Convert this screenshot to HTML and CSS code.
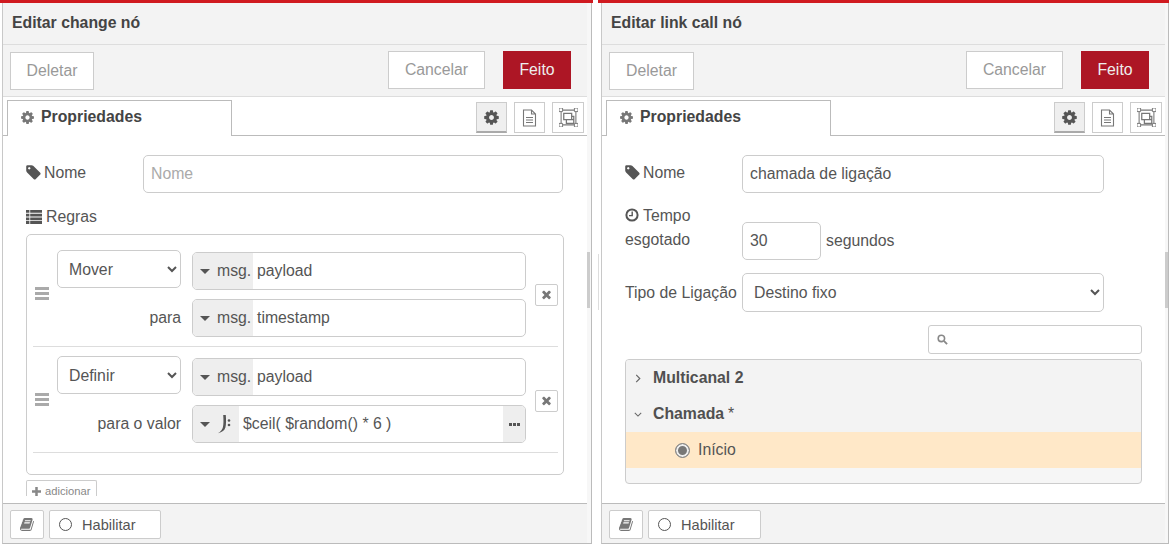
FILE: index.html
```html
<!DOCTYPE html>
<html lang="en">
<head>
    <meta charset="UTF-8">
    <title>Editar nó</title>
    <link rel="stylesheet" href="styles.css">
</head>
<body>
    <svg class="defs" width="0" height="0">
        <defs>
            <symbol id="i-cog" viewBox="0 0 1792 1792"><path d="M1152 896q0-106-75-181t-181-75-181 75-75 181 75 181 181 75 181-75 75-181zm512-109v222q0 12-8 23t-20 13l-185 28q-19 54-39 91 35 50 107 138 10 12 10 25t-9 23q-27 37-99 108t-94 71q-12 0-26-9l-138-108q-44 23-91 38-16 136-29 186-7 28-36 28h-222q-14 0-24.5-8.5t-11.5-21.5l-28-184q-49-16-90-37l-141 107q-10 9-25 9-14 0-25-11-126-114-165-168-7-10-7-23 0-12 8-23 15-21 51-66.5t54-70.5q-27-50-41-99l-183-27q-13-2-21-12.5t-8-23.5v-222q0-12 8-23t19-13l186-28q14-46 39-92-40-57-107-138-10-12-10-24 0-10 9-23 26-36 98.5-107.5t94.5-71.5q13 0 26 10l138 107q44-23 91-38 16-136 29-186 7-28 36-28h222q14 0 24.5 8.5t11.5 21.5l28 184q49 16 90 37l142-107q9-9 24-9 13 0 25 10 129 119 165 170 7 8 7 22 0 12-8 23-15 21-51 66.5t-54 70.5q26 50 41 98l183 28q13 2 21 12.5t8 23.5z"/></symbol>
            <symbol id="i-tag" viewBox="0 0 1792 1792"><path d="M576 448q0-53-37.5-90.5t-90.5-37.5-90.5 37.5-37.5 90.5 37.5 90.5 90.5 37.5 90.5-37.5 37.5-90.5zm1067 576q0 53-37 90l-491 492q-39 37-91 37-53 0-90-37l-715-716q-38-37-64.5-101t-26.5-117v-416q0-52 38-90t90-38h416q53 0 117 26.5t102 64.5l715 714q37 39 37 91z"/></symbol>
            <symbol id="i-book" viewBox="0 0 1792 1792"><path d="M1639 478q40 57 18 129l-275 906q-19 64-76.5 107.5t-122.5 43.5h-923q-77 0-148.5-53.5t-99.5-131.5q-24-67-2-127 0-4 3-27t4-37q1-8-3-21.5t-3-19.5q2-11 8-21t16.5-23.5 16.5-23.5q23-38 45-91.5t30-91.5q3-10 .5-30t-.5-28q3-11 17-28t17-23q21-36 42-92t25-90q1-9-2.5-32t.5-28q4-13 22-30.5t22-22.5q19-26 42.5-84.5t27.5-96.5q1-8-3-25.5t-2-26.5q2-8 9-18t18-23 17-21q8-12 16.5-30.5t15-35 16-36 19.5-32 26.5-23.5 36-11.5 47.5 5.5l-1 3q38-9 51-9h761q74 0 114 56t18 130l-274 906q-36 119-71.5 153.5t-128.5 34.5h-869q-27 0-38 15-11 16-1 43 24 70 144 70h923q29 0 56-15.5t35-41.5l300-987q7-22 5-57 38 15 59 43zm-1064 2q-4 13 2 22.5t20 9.5h608q13 0 25.5-9.5t16.5-22.5l21-64q4-13-2-22.5t-20-9.5h-608q-13 0-25.5 9.5t-16.5 22.5zm-83 256q-4 13 2 22.5t20 9.5h608q13 0 25.5-9.5t16.5-22.5l21-64q4-13-2-22.5t-20-9.5h-608q-13 0-25.5 9.5t-16.5 22.5z"/></symbol>
            <symbol id="i-times" viewBox="0 0 1792 1792"><path d="M1490 1322q0 40-28 68l-136 136q-28 28-68 28t-68-28l-294-294-294 294q-28 28-68 28t-68-28l-136-136q-28-28-28-68t28-68l294-294-294-294q-28-28-28-68t28-68l136-136q28-28 68-28t68 28l294 294 294-294q28-28 68-28t68 28l136 136q28 28 28 68t-28 68l-294 294 294 294q28 28 28 68z"/></symbol>
            <symbol id="i-list" viewBox="0 0 16 14"><path d="M0 0h3.400v2.800H0zM4.200 0H16v2.800H4.200zM0 3.700h3.400v2.800H0zM4.200 3.700H16v2.800H4.200zM0 7.400h3.400v2.800H0zM4.200 7.400H16v2.800H4.200zM0 11.100h3.400V14H0zM4.200 11.100H16V14H4.200z"/></symbol>
            <symbol id="i-clock" viewBox="0 0 14 14"><circle cx="7" cy="7" r="5.600" fill="none" stroke="currentColor" stroke-width="2"/><path d="M7.200 3.400v4.200H4" fill="none" stroke="currentColor" stroke-width="1.400"/></symbol>
            <symbol id="i-file" viewBox="0 0 14 18"><path d="M1 1h8l4 4v12H1z M9 1v4h4" fill="none" stroke="currentColor" stroke-width="1.100"/><path d="M3.500 8.500h7M3.500 11h7M3.500 13.500h7" fill="none" stroke="currentColor" stroke-width="1.100"/></symbol>
            <symbol id="i-group" viewBox="0 0 18 18"><path d="M2 2h14v14H2z" fill="none" stroke="currentColor" stroke-width="1"/><path d="M4.500 5h7.500v6H4.500zM7 11h7v3.500H7zM12 8h2v3" fill="none" stroke="currentColor" stroke-width="1.200"/><path d="M0 0h3.400v3.400H0zM14.600 0H18v3.400h-3.400zM0 14.600h3.400V18H0zM14.600 14.600H18V18h-3.400z" fill="#fff" stroke="currentColor" stroke-width=".9"/></symbol>
            <symbol id="i-search" viewBox="0 0 12 12"><circle cx="4.800" cy="4.800" r="3.500" fill="none" stroke="currentColor" stroke-width="1.700"/><path d="M7.500 7.500l3.500 3.500" stroke="currentColor" stroke-width="2"/></symbol>
            <symbol id="i-plus" viewBox="0 0 10 10"><path d="M3.600 0h2.800v3.600H10v2.800H6.400V10H3.600V6.400H0V3.600h3.600z"/></symbol>
            <symbol id="i-jsonata" viewBox="0 0 16 20"><path d="M7.200 1h2.600c.4 5.200.4 9.400-.4 12.400-.7 2.700-3.200 4.700-7.400 5.800 2.600-1.500 4.300-3.400 4.900-5.900.7-3.100.7-7 .3-12.300z"/><circle cx="13" cy="6.500" r="1.300"/><circle cx="13" cy="11" r="1.300"/></symbol>
        </defs>
    </svg>

    <div class="tray tray-change">
        <div class="tray-frame">
            <div class="tray-main">
                <div class="tray-title">Editar change nó</div>
                <div class="tray-toolbar">
                    <button class="btn btn-delete">Deletar</button>
                    <div class="toolbar-right">
                        <button class="btn btn-cancel">Cancelar</button>
                        <button class="btn btn-done">Feito</button>
                    </div>
                </div>
                <div class="tabs">
                    <div class="tab"><svg class="ico ico-tab"><use href="#i-cog"/></svg>Propriedades</div>
                    <div class="tab-buttons">
                        <span class="tab-btn active"><svg class="ico ico-cog"><use href="#i-cog"/></svg></span>
                        <span class="tab-btn"><svg class="ico ico-file"><use href="#i-file"/></svg></span>
                        <span class="tab-btn"><svg class="ico ico-group"><use href="#i-group"/></svg></span>
                    </div>
                </div>
                <div class="tray-body">
                    <div class="form-row">
                        <label class="form-label"><svg class="ico ico-label"><use href="#i-tag"/></svg>Nome</label>
                        <input class="field field-name-left" type="text" placeholder="Nome">
                    </div>
                    <div class="rules-label"><svg class="ico ico-list"><use href="#i-list"/></svg>Regras</div>
                    <div class="rules">
                        <div class="rule">
                            <div class="handle"><i></i><i></i><i></i></div>
                            <div class="rule-fields">
                                <div class="rule-line rule-line-first">
                                    <select class="rule-select"><option>Mover</option></select>
                                    <div class="typed">
                                        <span class="typed-type"><span class="caret"></span>msg.</span>
                                        <span class="typed-value">payload</span>
                                    </div>
                                </div>
                                <div class="rule-line">
                                    <span class="rule-word">para</span>
                                    <div class="typed">
                                        <span class="typed-type"><span class="caret"></span>msg.</span>
                                        <span class="typed-value">timestamp</span>
                                    </div>
                                </div>
                            </div>
                            <span class="rule-remove"><svg class="ico ico-times"><use href="#i-times"/></svg></span>
                        </div>
                        <div class="rule">
                            <div class="handle"><i></i><i></i><i></i></div>
                            <div class="rule-fields">
                                <div class="rule-line rule-line-first">
                                    <select class="rule-select"><option>Definir</option></select>
                                    <div class="typed">
                                        <span class="typed-type"><span class="caret"></span>msg.</span>
                                        <span class="typed-value">payload</span>
                                    </div>
                                </div>
                                <div class="rule-line">
                                    <span class="rule-word">para o valor</span>
                                    <div class="typed">
                                        <span class="typed-type typed-type-expr"><span class="caret"></span><svg class="ico ico-expr"><use href="#i-jsonata"/></svg></span>
                                        <span class="typed-value">$ceil( $random() * 6 )</span>
                                        <span class="typed-more"><i></i><i></i><i></i></span>
                                    </div>
                                </div>
                            </div>
                            <span class="rule-remove"><svg class="ico ico-times"><use href="#i-times"/></svg></span>
                        </div>
                    </div>
                    <span class="add-btn"><svg class="ico ico-plus"><use href="#i-plus"/></svg>adicionar</span>
                </div>
                <div class="tray-footer">
                    <span class="foot-btn foot-book"><svg class="ico ico-book"><use href="#i-book"/></svg></span>
                    <span class="foot-btn foot-enable"><span class="ring"></span>Habilitar</span>
                </div>
            </div>
            <div class="gutter"><span class="thumb"></span></div>
        </div>
    </div>

    <div class="tray tray-link">
        <span class="resize-line"></span>
        <div class="tray-frame">
            <div class="tray-main">
                <div class="tray-title">Editar link call nó</div>
                <div class="tray-toolbar">
                    <button class="btn btn-delete">Deletar</button>
                    <div class="toolbar-right">
                        <button class="btn btn-cancel">Cancelar</button>
                        <button class="btn btn-done">Feito</button>
                    </div>
                </div>
                <div class="tabs">
                    <div class="tab"><svg class="ico ico-tab"><use href="#i-cog"/></svg>Propriedades</div>
                    <div class="tab-buttons">
                        <span class="tab-btn active"><svg class="ico ico-cog"><use href="#i-cog"/></svg></span>
                        <span class="tab-btn"><svg class="ico ico-file"><use href="#i-file"/></svg></span>
                        <span class="tab-btn"><svg class="ico ico-group"><use href="#i-group"/></svg></span>
                    </div>
                </div>
                <div class="tray-body">
                    <div class="form-row">
                        <label class="form-label"><svg class="ico ico-label"><use href="#i-tag"/></svg>Nome</label>
                        <input class="field field-wide" type="text" value="chamada de ligação">
                    </div>
                    <div class="form-row form-row-timeout">
                        <label class="form-label"><svg class="ico ico-clock"><use href="#i-clock"/></svg>Tempo<br>esgotado</label>
                        <input class="field field-num" type="text" value="30">
                        <span class="unit">segundos</span>
                    </div>
                    <div class="form-row form-row-type">
                        <label class="form-label">Tipo de Ligação</label>
                        <select class="field field-wide field-select"><option>Destino fixo</option></select>
                    </div>
                    <div class="search-row">
                        <div class="search"><svg class="ico ico-search"><use href="#i-search"/></svg></div>
                    </div>
                    <div class="tree">
                        <div class="tree-row tree-head"><svg class="chev" viewBox="0 0 8 10"><path d="M2 1l4 4-4 4"/></svg>Multicanal 2</div>
                        <div class="tree-row tree-head"><svg class="chev" viewBox="0 0 10 8"><path d="M1 2l4 4 4-4"/></svg>Chamada <span class="tree-star">*</span></div>
                        <div class="tree-row tree-node"><span class="radio"></span>Início</div>
                    </div>
                </div>
                <div class="tray-footer">
                    <span class="foot-btn foot-book"><svg class="ico ico-book"><use href="#i-book"/></svg></span>
                    <span class="foot-btn foot-enable"><span class="ring"></span>Habilitar</span>
                </div>
            </div>
            <div class="gutter"><span class="thumb"></span></div>
        </div>
    </div>
</body>
</html>
```

FILE: styles.css
```css
* {
    box-sizing: border-box;
}
html, body {
    height: 100%;
}
body {
    margin: 0;
    display: flex;
    height: 544px;
    overflow: hidden;
    background: #fff;
    color: #555;
    font-family: "Liberation Sans", Arial, sans-serif;
    font-size: 15.8px;
}
.defs {
    position: absolute;
}
.ico {
    display: block;
    fill: currentColor;
    flex: none;
}

/* trays */
.tray {
    position: relative;
    height: 544px;
    border-top: 3px solid #d01a20;
}
.tray-change {
    width: 593px;
    padding: 0 1px 0 2px;
}
.tray-link {
    width: 571px;
    margin-left: 5px;
    padding: 0 0 0 3px;
}
.tray-frame {
    display: flex;
    height: 100%;
    border-left: 1px solid #c8c8c8;
    border-right: 1px solid #bbb;
    border-bottom: 1px solid #bbb;
}
.tray-main {
    flex: 1;
    min-width: 0;
    display: flex;
    flex-direction: column;
}
.gutter {
    position: relative;
    width: 3px;
    background: #f7f7f7;
}
.tray-change .gutter {
    width: 4px;
}
.thumb {
    position: absolute;
    top: 249px;
    left: 0;
    width: 3px;
    height: 56px;
    background: #ccc;
}
.resize-line {
    position: absolute;
    left: 0;
    top: 251px;
    width: 1px;
    height: 56px;
    background: #ddd;
}

.tray-title {
    height: 42px;
    padding: 12px 0 0 9px;
    background: #f3f3f3;
    border-bottom: 1px solid #ddd;
    color: #444;
    font-size: 15.8px;
    font-weight: bold;
    line-height: 16px;
}
.tray-toolbar {
    display: flex;
    justify-content: space-between;
    height: 52px;
    padding: 6px 16px 0 7px;
    background: #f3f3f3;
    border-bottom: 1px solid #ddd;
}
.toolbar-right {
    display: flex;
    gap: 18px;
}
.btn {
    height: 38px;
    border: 1px solid #ccc;
    background: #fff;
    color: #999;
    font: inherit;
    padding: 0;
}
.btn-delete {
    width: 84px;
    margin-top: 1px;
}
.tray-link .btn-delete {
    width: 85px;
}
.btn-cancel {
    width: 97px;
}
.btn-done {
    width: 68px;
    border-color: #ad1625;
    background: #ad1625;
    color: #eee;
}

/* tabs */
.tabs {
    display: flex;
    justify-content: space-between;
    height: 39px;
    padding: 3px 3px 0 4px;
    background: #fff;
    border-bottom: 1px solid #bbb;
}
.tab {
    display: flex;
    align-items: center;
    gap: 6px;
    width: 225px;
    height: 36px;
    padding: 0 0 3px 12px;
    border: 1px solid #bbb;
    border-bottom: none;
    background: #fff;
    color: #444;
    font-size: 15.8px;
    font-weight: bold;
}
.ico-tab {
    width: 15px;
    height: 15px;
    color: #777;
}
.tab-buttons {
    display: flex;
    gap: 7px;
    padding-top: 2px;
}
.tab-btn {
    display: flex;
    align-items: center;
    justify-content: center;
    width: 31px;
    height: 31px;
    border: 1px solid #ccc;
    background: #fff;
    color: #777;
}
.tab-btn:last-child {
    width: 32px;
}
.tab-btn.active {
    border-bottom: 2px solid #aaa;
    background: #efefef;
    color: #555;
}
.ico-cog {
    width: 17px;
    height: 17px;
}
.ico-file {
    width: 15px;
    height: 18px;
}
.ico-group {
    width: 19px;
    height: 19px;
}

/* form */
.tray-body {
    flex: 1;
    padding: 19px 0 0 23px;
    background: #fff;
    border-bottom: 1px solid #bbb;
    overflow: hidden;
}
.form-row {
    display: flex;
    align-items: center;
    height: 38px;
}
.form-label {
    display: flex;
    align-items: center;
    flex-wrap: wrap;
    width: 117px;
    flex: none;
    margin-top: -3px;
    line-height: 24px;
}
.ico-label {
    width: 17px;
    height: 17px;
    margin: 0 2px 0 -1px;
}
.ico-clock {
    width: 14px;
    height: 14px;
    margin-right: 4px;
}
.field {
    height: 38px;
    border: 1px solid #ccc;
    border-radius: 5px;
    background: #fff;
    color: #555;
    font: inherit;
    padding: 0 7px;
    outline: none;
}
.field::placeholder {
    color: #aaa;
}
.field-name-left {
    width: 420px;
}
.field-wide {
    width: 362px;
}
.field-num {
    width: 79px;
}
.field-select {
    height: 39px;
}
.unit {
    margin-left: 5px;
}
.form-row-timeout {
    margin-top: 29px;
}
.form-row-timeout .form-label {
    display: block;
    align-self: flex-start;
    margin-top: -18px;
}
.form-row-timeout .ico-clock {
    display: inline-block;
    vertical-align: -1px;
}
.form-row-type {
    margin-top: 13px;
    height: 39px;
}
.form-row-type .form-label {
    margin-top: 0;
    white-space: nowrap;
}
.search-row {
    display: flex;
    justify-content: flex-end;
    width: 517px;
    margin-top: 13px;
}
.search {
    display: flex;
    align-items: center;
    width: 214px;
    height: 29px;
    padding-left: 8px;
    border: 1px solid #ccc;
    border-radius: 3px;
    color: #888;
}
.ico-search {
    width: 11px;
    height: 11px;
}
.tree {
    width: 517px;
    height: 125px;
    margin-top: 5px;
    border: 1px solid #ccc;
    border-radius: 4px;
    background: #f6f6f6;
    overflow: hidden;
}
.tree-row {
    display: flex;
    align-items: center;
    height: 36px;
}
.tree-head {
    padding-left: 8px;
    background: #f3f3f3;
    color: #505050;
    font-weight: bold;
}
.chev {
    width: 8px;
    height: 9px;
    margin-right: 11px;
    fill: none;
    stroke: #666;
    stroke-width: 1.3;
}
.tree-star {
    margin-left: 4px;
    font-weight: normal;
}
.tree-node {
    padding-left: 49px;
    background: #ffe8c8;
}
.radio {
    width: 15px;
    height: 15px;
    margin-right: 8px;
    border: 1px solid #888;
    border-radius: 50%;
    background: #777;
    box-shadow: inset 0 0 0 2px #eee;
}

/* change rules */
.rules-label {
    display: flex;
    align-items: center;
    margin-top: 13px;
    height: 22px;
}
.ico-list {
    width: 16px;
    height: 14px;
    margin-right: 4px;
}
.rules {
    width: 538px;
    height: 241px;
    margin-top: 6px;
    padding: 6px 5px 0 6px;
    border: 1px solid #ccc;
    border-radius: 5px;
}
.rule {
    display: flex;
    align-items: center;
    height: 106px;
    padding: 11px 0 9px;
    border-bottom: 1px solid #ddd;
}
.handle {
    width: 24px;
    padding-left: 2px;
    margin-top: -1px;
    flex: none;
}
.handle i {
    display: block;
    width: 14px;
    height: 3px;
    margin-bottom: 2px;
    background: #aaa;
}
.rule-fields {
    width: 469px;
    flex: none;
}
.rule-line {
    display: flex;
    align-items: center;
    gap: 11px;
    height: 38px;
}
.rule-line-first {
    margin-bottom: 9px;
}
.rule-select {
    align-self: flex-start;
    width: 124px;
    height: 38px;
    margin-top: -2px;
    padding: 0 7px;
    border: 1px solid #ccc;
    border-radius: 5px;
    background: #fff;
    color: #555;
    font: inherit;
    outline: none;
}
.rule-word {
    width: 124px;
    text-align: right;
}
.typed {
    display: flex;
    align-items: center;
    width: 334px;
    height: 38px;
    border: 1px solid #ccc;
    border-radius: 5px;
    overflow: hidden;
}
.typed-type {
    display: flex;
    align-items: center;
    width: 60px;
    height: 100%;
    padding-left: 7px;
    background: #eee;
    flex: none;
}
.typed-type-expr {
    width: 46px;
}
.caret {
    width: 0;
    height: 0;
    margin-right: 7px;
    border: 5px solid transparent;
    border-top: 5px solid #555;
    border-bottom: none;
}
.ico-expr {
    width: 16px;
    height: 20px;
    margin-left: -1px;
}
.typed-value {
    flex: 1;
    padding-left: 4px;
}
.typed-more {
    display: flex;
    align-items: center;
    justify-content: center;
    gap: 1px;
    width: 22px;
    height: 100%;
    background: #eee;
}
.typed-more i {
    width: 3px;
    height: 3px;
    background: #555;
}
.rule-remove {
    display: flex;
    align-items: center;
    justify-content: center;
    width: 23px;
    height: 22px;
    margin-left: 9px;
    border: 1px solid #ccc;
    border-radius: 2px;
    color: #777;
}
.ico-times {
    width: 13px;
    height: 13px;
}
.add-btn {
    display: inline-flex;
    align-items: center;
    width: 71px;
    height: 16px;
    margin-top: 5px;
    padding: 5px 0 0 5px;
    border: 1px solid #ccc;
    border-bottom: none;
    border-radius: 2px 2px 0 0;
    color: #888;
    font-size: 11.2px;
    overflow: hidden;
}
.ico-plus {
    width: 9px;
    height: 9px;
    margin-right: 4px;
}

/* footer */
.tray-footer {
    display: flex;
    gap: 5px;
    height: 39px;
    flex: none;
    padding: 6px 0 0 7px;
    background: #f3f3f3;
}
.foot-btn {
    display: flex;
    align-items: center;
    height: 29px;
    border: 1px solid #ccc;
    border-radius: 2px;
    background: #fff;
    font-size: 14.6px;
}
.foot-book {
    justify-content: center;
    width: 34px;
    color: #777;
}
.foot-enable {
    width: 112px;
    padding-left: 9px;
}
.tray-link .foot-enable {
    width: 113px;
}
.ico-book {
    width: 15px;
    height: 15px;
}
.ring {
    width: 13px;
    height: 13px;
    margin-right: 10px;
    border: 1.5px solid #555;
    border-radius: 50%;
}
```
